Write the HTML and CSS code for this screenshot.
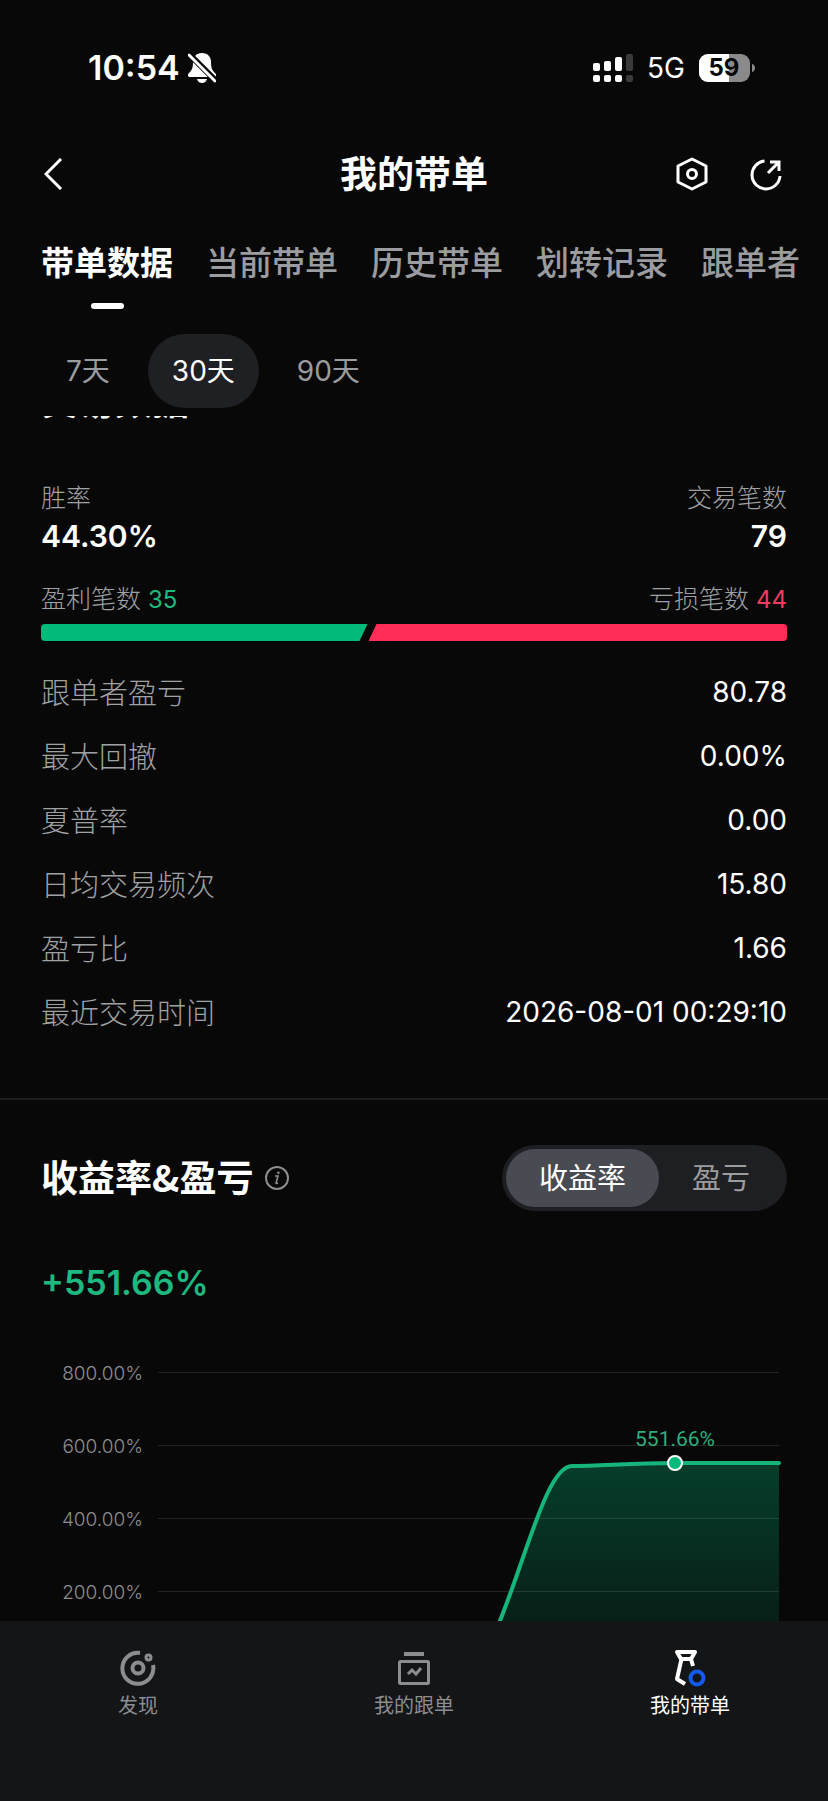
FILE: index.html
```html
<!DOCTYPE html>
<html lang="zh-CN">
<head>
    <meta charset="UTF-8">
    <meta name="viewport" content="width=device-width, initial-scale=1">
    <title>我的带单</title>
    <link rel="stylesheet" href="styles.css">
</head>
<body>

<div class="status-bar">
    <div class="status-left">
        <span class="time">10:54</span>
        <svg width="28" height="30" viewBox="0 0 28 30" fill="#fff">
            <path d="M14 0C8 0 5 4 5 9c0 6-1 8-4 11-2 2-1 4 1 4h24c2 0 3-2 1-4-3-3-4-5-4-11 0-5-3-9-9-9z"/>
            <path d="M9 26h10c-1 3-3 4-5 4s-4-1-5-4z"/>
            <path d="M0 0L28 28" stroke="#080808" stroke-width="6"/>
            <path d="M1 2L27 28" stroke="#fff" stroke-width="3" stroke-linecap="round"/>
        </svg>
    </div>
    <div class="status-right">
        <svg width="40" height="28" viewBox="0 0 40 28">
            <g fill="#fff">
                <rect x="0" y="9" width="7" height="8" rx="2"/>
                <rect x="11" y="7" width="7" height="10" rx="2"/>
                <rect x="22" y="3" width="7" height="14" rx="2"/>
                <rect x="0" y="21" width="7" height="7" rx="2"/>
                <rect x="11" y="21" width="7" height="7" rx="2"/>
                <rect x="22" y="21" width="7" height="7" rx="2"/>
            </g>
            <g fill="#3a3a3b">
                <rect x="33" y="0" width="7" height="17" rx="2"/>
                <rect x="33" y="21" width="7" height="7" rx="2"/>
            </g>
        </svg>
        <span class="network">5G</span>
        <svg width="56" height="28" viewBox="0 0 56 28">
            <rect width="51" height="28" rx="9" fill="#8a8a8a"/>
            <path d="M9 0h21v28H9a9 9 0 0 1-9-9V9a9 9 0 0 1 9-9z" fill="#fff"/>
            <path d="M53 10c4 1 4 7 0 8z" fill="#8a8a8a"/>
            <text x="25" y="22" class="battery-text">59</text>
        </svg>
    </div>
</div>

<header class="header">
    <button class="icon-btn" aria-label="返回">
        <svg width="20" height="32" viewBox="0 0 20 32" fill="none" stroke="#fff" stroke-width="3">
            <path d="M17 1L2 16l15 15"/>
        </svg>
    </button>
    <h1>我的带单</h1>
    <div class="header-actions">
        <button class="icon-btn" aria-label="设置">
            <svg width="32" height="34" viewBox="0 0 32 34" fill="none" stroke="#fff" stroke-width="3">
                <path d="M16 2l14 7v16l-14 7-14-7V9z" stroke-linejoin="round"/>
                <circle cx="16" cy="17" r="4.5"/>
            </svg>
        </button>
        <button class="icon-btn" aria-label="分享">
            <svg width="32" height="34" viewBox="0 0 32 34" fill="none" stroke="#fff" stroke-width="3">
                <path d="M14.500 4A14 14 0 1 0 30 19"/>
                <path d="M18 16L29 5M20 5h9v9"/>
            </svg>
        </button>
    </div>
</header>

<nav class="tabs">
    <a href="#" class="tab active">带单数据</a>
    <a href="#" class="tab">当前带单</a>
    <a href="#" class="tab">历史带单</a>
    <a href="#" class="tab">划转记录</a>
    <a href="#" class="tab">跟单者</a>
</nav>

<div class="periods">
    <button class="period">7天</button>
    <button class="period active">30天</button>
    <button class="period">90天</button>
</div>

<main class="content">
    <section class="trade-data">
        <h2 class="scrolled-title">交易数据</h2>

        <div class="summary">
            <div>
                <div class="label">胜率</div>
                <div class="summary-value">44.30%</div>
            </div>
            <div class="align-right">
                <div class="label">交易笔数</div>
                <div class="summary-value">79</div>
            </div>
        </div>

        <div class="counts label">
            <span>盈利笔数 <span class="green">35</span></span>
            <span>亏损笔数 <span class="red">44</span></span>
        </div>
        <div class="ratio-bar">
            <div class="win" style="flex-grow: 35"></div>
            <div class="loss" style="flex-grow: 44"></div>
        </div>

        <dl class="stats">
            <div class="stat-row"><dt>跟单者盈亏</dt><dd>80.78</dd></div>
            <div class="stat-row"><dt>最大回撤</dt><dd>0.00%</dd></div>
            <div class="stat-row"><dt>夏普率</dt><dd>0.00</dd></div>
            <div class="stat-row"><dt>日均交易频次</dt><dd>15.80</dd></div>
            <div class="stat-row"><dt>盈亏比</dt><dd>1.66</dd></div>
            <div class="stat-row"><dt>最近交易时间</dt><dd>2026-08-01 00:29:10</dd></div>
        </dl>
    </section>

    <section class="profit">
        <div class="profit-head">
            <h2>收益率&amp;盈亏</h2>
            <svg class="info" width="24" height="24" viewBox="0 0 24 24" fill="none" stroke="#8c8d90" stroke-width="2">
                <circle cx="12" cy="12" r="11"/>
                <path d="M10 10h3l-2 7q0 1 2 0" stroke-width="1.6"/>
                <circle cx="13.4" cy="6.8" r="1.3" fill="#8c8d90" stroke="none"/>
            </svg>
            <div class="toggle">
                <button class="active">收益率</button>
                <button>盈亏</button>
            </div>
        </div>

        <div class="profit-value">+551.66%</div>

        <svg class="chart" viewBox="0 0 746 330">
            <defs>
                <linearGradient id="area" x1="0" y1="0" x2="0" y2="1">
                    <stop offset="0" stop-color="#02bb7a" stop-opacity="0.3"/>
                    <stop offset="1" stop-color="#02bb7a" stop-opacity="0.1"/>
                </linearGradient>
            </defs>
            <path d="M447 310C483 230 504 126 531 126C560 126 590 123 634 123H738V310z" fill="url(#area)"/>
            <g class="grid">
                <path d="M117 32.5H738"/>
                <path d="M117 105.5H738"/>
                <path d="M117 178.5H738"/>
                <path d="M117 251.5H738"/>
            </g>
            <g class="axis">
                <text x="102" y="40">800.00%</text>
                <text x="102" y="113">600.00%</text>
                <text x="102" y="186">400.00%</text>
                <text x="102" y="259">200.00%</text>
            </g>
            <path d="M447 310C483 230 504 126 531 126C560 126 590 123 634 123H738" fill="none" stroke="#16b57c" stroke-width="4" stroke-linecap="round"/>
            <circle cx="634" cy="123" r="7" fill="#02bb7a" stroke="#fff" stroke-width="2"/>
            <text x="634" y="106" class="point-label">551.66%</text>
        </svg>
    </section>
</main>

<nav class="bottom-nav">
    <a href="#">
        <svg width="36" height="38" viewBox="0 0 36 38" fill="none" stroke="#8c8d90" stroke-width="4">
            <path d="M20 4A15.500 15.500 0 1 0 33 16"/>
            <circle cx="18" cy="19" r="5.500"/>
            <circle cx="28.500" cy="8.500" r="2.500" stroke-width="3"/>
        </svg>
        <span>发现</span>
    </a>
    <a href="#">
        <svg width="36" height="38" viewBox="0 0 36 38" fill="none" stroke="#8c8d90" stroke-width="3">
            <path d="M8 5h20" stroke-width="4"/>
            <rect x="3.500" y="12.500" width="29" height="22" rx="1"/>
            <path d="M12 25l4-4 4 4 5-6"/>
        </svg>
        <span>我的跟单</span>
    </a>
    <a href="#" class="active">
        <svg width="36" height="38" viewBox="0 0 36 38" fill="none" stroke="#fff" stroke-width="4">
            <path d="M5 3h18l-4 7H9zM9.500 10L5 30l8 5M19 10l2 7" stroke-linejoin="round"/>
            <circle cx="25" cy="29" r="6.500" stroke="#1459f0"/>
        </svg>
        <span>我的带单</span>
    </a>
</nav>

</body>
</html>
```

FILE: styles.css
```css
* {
    box-sizing: border-box;
}
body {
    font-family: Inter, "Noto Sans CJK SC", sans-serif;
    margin: 0;
    height: 100vh;
    display: flex;
    flex-direction: column;
    overflow: hidden;
    background: #080808;
    color: #fff;
}
h1, h2, dl, dd {
    margin: 0;
}
h1, h2 {
    font-family: "Noto Sans CJK SC", sans-serif;
    font-size: 37px;
    line-height: 48px;
    font-weight: 600;
    padding-bottom: 4px;
}
button {
    font-family: inherit;
    color: inherit;
    background: none;
    border: none;
    padding: 0;
    cursor: pointer;
}
a {
    color: inherit;
    text-decoration: none;
}
svg {
    display: block;
    flex-shrink: 0;
}

/* status bar */
.status-bar {
    flex-shrink: 0;
    height: 135px;
    padding: 0 73px 0 88px;
    display: flex;
    justify-content: space-between;
    align-items: center;
}
.status-left {
    display: flex;
    align-items: center;
    gap: 8px;
}
.time {
    font-size: 34px;
    font-weight: 600;
}
.status-right {
    display: flex;
    align-items: center;
    gap: 14px;
}
.network {
    font-size: 28px;
}
.battery-text {
    font-size: 24px;
    font-weight: 700;
    text-anchor: middle;
    fill: #080808;
}

/* title */
.header {
    flex-shrink: 0;
    height: 78px;
    padding: 0 44px;
    display: grid;
    grid-template-columns: 1fr auto 1fr;
    align-items: center;
}
.header-actions {
    display: flex;
    justify-content: flex-end;
    gap: 42px;
    padding-right: 2px;
}

/* tabs */
.tabs {
    flex-shrink: 0;
    display: flex;
    gap: 33px;
    padding: 26px 0 0 41px;
    overflow: hidden;
}
.tab {
    font-size: 33px;
    line-height: 48px;
    font-weight: 500;
    white-space: nowrap;
    color: #9b9c9f;
}
.tab.active {
    font-weight: 600;
    color: #fff;
}
.tab.active::after {
    content: "";
    display: block;
    width: 33px;
    height: 6px;
    margin: 16px auto 0;
    border-radius: 3px;
    background: #fff;
}

.periods {
    flex-shrink: 0;
    display: flex;
    gap: 14px;
    padding: 25px 42px 8px;
}
.period {
    height: 74px;
    padding: 0 24px 4px;
    border-radius: 37px;
    font-size: 28px;
    color: #9b9c9f;
}
.period.active {
    background: #1e2023;
    color: #fff;
}

.content {
    flex: 1;
    min-height: 0;
    overflow: hidden;
}
.trade-data {
    padding: 0 41px 54px;
    border-bottom: 2px solid #1c1d1e;
}
.scrolled-title {
    margin-top: -41px;
}
.summary {
    display: flex;
    justify-content: space-between;
    margin-top: 56px;
}
.align-right {
    text-align: right;
}
.label {
    font-size: 25px;
    line-height: 30px;
    font-weight: 300;
    color: #a0a1a4;
}
.summary-value {
    font-size: 30px;
    line-height: 40px;
    font-weight: 600;
    margin-top: 3px;
}
.counts {
    display: flex;
    justify-content: space-between;
    margin-top: 28px;
}
.green,
.red {
    font-size: 24px;
    font-weight: 400;
}
.green {
    color: #1db980;
}
.red {
    color: #f33b5f;
}
.ratio-bar {
    display: flex;
    height: 17px;
    margin-top: 9px;
    border-radius: 4px;
    overflow: hidden;
}
.win {
    background: #02bb7a;
    clip-path: polygon(0 0, 100% 0, calc(100% - 8px) 100%, 0 100%);
}
.loss {
    flex-basis: 8px;
    background: #ff2d58;
    margin-left: 1px;
    clip-path: polygon(8px 0, 100% 0, 100% 100%, 0 100%);
}
.stats {
    margin-top: 19px;
}
.stat-row {
    display: flex;
    justify-content: space-between;
    align-items: center;
    height: 64px;
}
.stat-row dt {
    padding-bottom: 2px;
    font-size: 29px;
    font-weight: 300;
    color: #a0a1a4;
}
.stat-row dd {
    font-size: 28px;
    font-weight: 400;
}

/* profit chart */
.profit {
    padding: 45px 41px 0;
}
.profit-head {
    display: flex;
    align-items: center;
}
.info {
    margin-left: 12px;
}
.toggle {
    display: flex;
    margin-left: auto;
    padding: 4px;
    border-radius: 33px;
    background: #1e1f22;
}
.toggle button {
    height: 58px;
    padding: 0 33px 4px;
    border-radius: 29px;
    font-size: 29px;
    color: #9b9c9f;
}
.toggle button.active {
    background: #494b52;
    color: #fff;
}
.profit-value {
    margin-top: 50px;
    font-size: 34px;
    line-height: 44px;
    font-weight: 600;
    color: #1db980;
}
.chart {
    width: 100%;
    margin-top: 35px;
}
.grid {
    stroke: #fff;
    stroke-opacity: 0.11;
}
.axis {
    font-size: 19px;
    font-weight: 300;
    text-anchor: end;
    fill: #8c8d90;
}
.point-label {
    font-family: Roboto, sans-serif;
    font-size: 21px;
    text-anchor: middle;
    fill: #2fae7c;
}

/* bottom navigation */
.bottom-nav {
    flex-shrink: 0;
    display: grid;
    grid-template-columns: repeat(3, 1fr);
    height: 180px;
    padding-top: 28px;
    background: #141517;
}
.bottom-nav a {
    display: flex;
    flex-direction: column;
    align-items: center;
    gap: 4px;
    font-size: 20px;
    line-height: 30px;
    color: #8c8d90;
}
.bottom-nav a.active {
    color: #fff;
}
```
